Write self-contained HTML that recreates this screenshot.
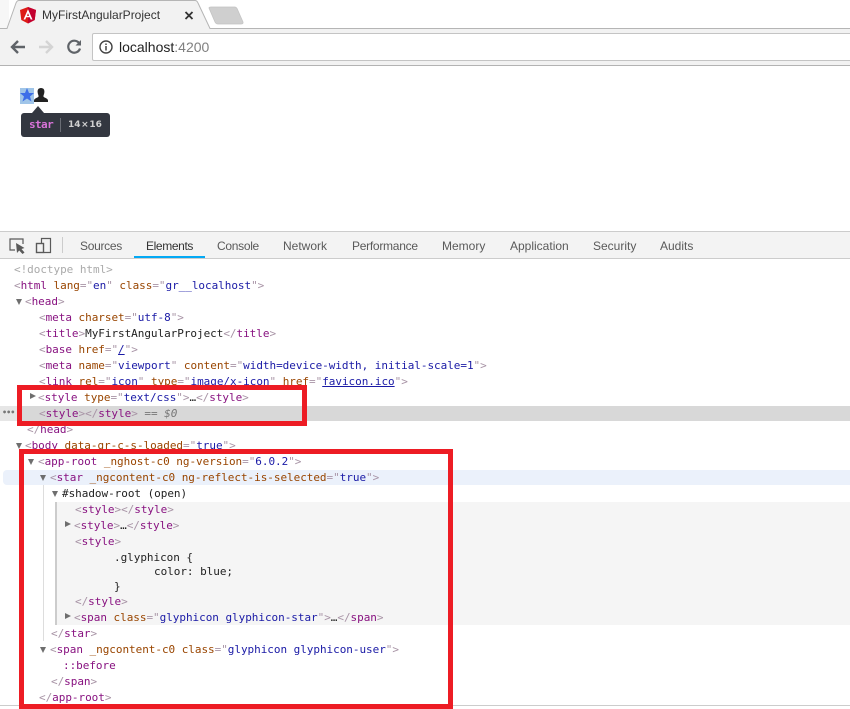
<!DOCTYPE html>
<html><head><meta charset="utf-8"><title>MyFirstAngularProject</title>
<style>
html,body{margin:0;padding:0;background:#fff}
body{width:850px;height:709px;position:relative;overflow:hidden;font-family:"Liberation Sans",sans-serif}
.a{position:absolute}
.l{position:absolute;margin-top:1px;font:11px/16px "DejaVu Sans Mono","Liberation Mono",monospace;white-space:pre;color:#222;letter-spacing:-.04px;height:16px}
.b{color:#a894a6}.n{color:#881280}.k{color:#994500}.v{color:#1a1aa6}.g{color:#aaa}.u{color:#1a1aa6;text-decoration:underline}
.t{position:absolute;top:239px;font-size:12px;line-height:14px;color:#5a5a5a;white-space:pre}
.tri{position:absolute;width:0;height:0;border-left:3.5px solid transparent;border-right:3.5px solid transparent;border-top:6px solid #6e6e6e}
.trr{position:absolute;width:0;height:0;border-top:3.5px solid transparent;border-bottom:3.5px solid transparent;border-left:6px solid #6e6e6e}
</style></head><body>
<div class="a" style="left:0;top:0;width:850px;height:66px;background:#f2f2f2"></div>
<div class="a" style="left:0;top:0;width:850px;height:28px;background:#fff"></div>
<div class="a" style="left:0;top:0;width:9px;height:28px;background:#f7f7f7"></div>
<div class="a" style="left:0;top:65px;width:850px;height:1px;background:#b3b3b3"></div>
<svg class="a" style="left:0;top:0" width="850" height="30" viewBox="0 0 850 30">
<path d="M7 29L16 3Q17 .5 19 .5H195Q197 .5 198 3L210 29Z" fill="#f2f2f2"/>
<path d="M0 28.500H7L16 3Q17 .5 19 .5H195Q197 .5 198 3L210 28.500H850" fill="none" stroke="#b5b5b5"/>
<path d="M209 8Q209 7 211 7H235Q236 7 237 8.500L243 22Q243.500 24 241 24H218Q216 24 215 22Z" fill="#cfcfcf" stroke="#c4c4c4" stroke-width=".8"/>
<path d="M28 7L20 10L21.300 20L28 23.500L34.700 20L36 10Z" fill="#dd1b16"/><path d="M28 7L36 10L34.700 20L28 23.500Z" fill="#c3002f"/>
<path d="M28 9.300L23.500 19.500H25.300L26.200 17.300H29.800L30.700 19.500H32.500ZM26.900 15.900L28 13.200L29.100 15.900Z" fill="#fff"/>
<path d="M185.500 12L192.500 19M192.500 12L185.500 19" stroke="#333" stroke-width="1.800"/>
</svg>
<div class="a" style="left:42px;top:7px;font-size:12px;line-height:16px;color:#333;white-space:pre">MyFirstAngularProject</div>
<svg class="a" style="left:0;top:30px" width="100" height="34" viewBox="0 0 100 34">
<path d="M25 17H12.500M18 11L12 17L18 23" fill="none" stroke="#5f6368" stroke-width="2.400"/>
<path d="M39 17H52M46 11L52 17L46 23" fill="none" stroke="#d4d4d4" stroke-width="2.400"/>
<path d="M79 13A6 6 0 1 0 80 18.500" fill="none" stroke="#5f6368" stroke-width="2.200"/><path d="M81 10V15.500H75.500Z" fill="#5f6368"/>
</svg>
<div class="a" style="left:92px;top:33px;width:770px;height:26px;background:#fff;border:1px solid #c4c4c4;border-radius:2px"></div>
<svg class="a" style="left:98px;top:39px" width="16" height="16" viewBox="0 0 16 16"><circle cx="8" cy="8" r="6" fill="none" stroke="#444" stroke-width="1.400"/><path d="M8 7V11.500M8 4.500V6" stroke="#444" stroke-width="1.500"/></svg>
<div class="a" style="left:119px;top:39px;font-size:14px;line-height:16px;color:#222;white-space:pre">localhost<span style="color:#808080">:4200</span></div>

<div class="a" style="left:20px;top:88px;width:14px;height:16px;background:#a0c5e8"></div>
<svg class="a" style="left:20px;top:88px" width="30" height="16" viewBox="0 0 30 16">
<path d="M7 0L9 5H14L10 8.500L11.500 13.500L7 10.500L2.500 13.500L4 8.500L0 5H5Z" fill="#3d6ee8"/>
<path d="M21 0C23.500 0 24.600 1.800 24.400 4C24.200 6.200 23.400 7.300 23.400 8.200C23.400 9.700 28 10 28 12.500V14H14V12.500C14 10 18.600 9.700 18.600 8.200C18.600 7.300 17.800 6.200 17.600 4C17.400 1.800 18.500 0 21 0Z" fill="#222"/>
</svg>
<div class="a" style="left:21px;top:113px;width:89px;height:24px;background:#333740;border-radius:3px"></div>
<div class="a" style="left:32px;top:106px;width:0;height:0;border-left:6.500px solid transparent;border-right:6.500px solid transparent;border-bottom:7px solid #333740"></div>
<div class="a" style="left:29px;top:117px;font:bold 11px/16px 'DejaVu Sans Mono',monospace;color:#d973d9;letter-spacing:-.6px">star</div>
<div class="a" style="left:60px;top:118px;width:1px;height:14px;background:#6a6d75"></div>
<div class="a" style="left:68px;top:118px;font:bold 9px/14px 'DejaVu Sans',sans-serif;color:#d0d0d0;white-space:pre;word-spacing:-2.500px">14 × 16</div>

<div class="a" style="left:0;top:231px;width:850px;height:28px;background:#f3f3f3;border-top:1px solid #ccc;border-bottom:1px solid #ccc;box-sizing:border-box"></div>
<svg class="a" style="left:7px;top:236px" width="46" height="20" viewBox="0 0 46 20">
<path d="M8 14H3V3H16V8" fill="none" stroke="#5a5a5a" stroke-width="1.200"/><path d="M9 7L10 17L12.200 14.500L15.500 18L17.500 16.500L14.500 13L17.500 12Z" fill="#5a5a5a"/>
<path d="M34.500 7V2.500H43.500V16.500H37" fill="none" stroke="#5a5a5a" stroke-width="1.200"/><rect x="29.500" y="7.500" width="7" height="9" fill="none" stroke="#5a5a5a" stroke-width="1.400"/>
</svg>
<div class="a" style="left:62px;top:237px;width:1px;height:16px;background:#ccc"></div>
<div class="t" style="left:80px;letter-spacing:-.3px">Sources</div>
<div class="t" style="left:146px;color:#333;letter-spacing:-.37px">Elements</div>
<div class="a" style="left:134px;top:256px;width:71px;height:2px;background:#03a9f4"></div>
<div class="t" style="left:217px;letter-spacing:-.3px">Console</div>
<div class="t" style="left:283px">Network</div>
<div class="t" style="left:352px;letter-spacing:-.27px">Performance</div>
<div class="t" style="left:442px">Memory</div>
<div class="t" style="left:510px">Application</div>
<div class="t" style="left:593px">Security</div>
<div class="t" style="left:660px">Audits</div>

<div class="a" style="left:0;top:406px;width:850px;height:15px;background:#d8d8d8"></div>
<div class="a" style="left:0;top:406px;width:17px;height:15px;background:#e6e6e6"></div>
<div class="a" style="left:2px;top:408px;font:bold 8px/10px 'DejaVu Sans',sans-serif;color:#777;letter-spacing:-1px">•••</div>
<div class="a" style="left:3px;top:470px;width:847px;height:15px;background:#ebf1fb;border-radius:4px 0 0 4px"></div>
<div class="a" style="left:55px;top:502px;width:795px;height:123px;background:#f5f5f5;border-left:2px solid #ccc;box-sizing:border-box"></div>
<div class="a" style="left:43px;top:485px;width:1px;height:156px;background:#ddd"></div>
<div class="a" style="left:0;top:705px;width:850px;height:1px;background:#ccc"></div>

<div class="l g" style="left:14px;top:261px">&lt;!doctype html&gt;</div>
<div class="l" style="left:14px;top:277px"><span class="b">&lt;</span><span class="n">html</span> <span class="k">lang</span><span class="b">="</span><span class="v">en</span><span class="b">"</span> <span class="k">class</span><span class="b">="</span><span class="v">gr__localhost</span><span class="b">"&gt;</span></div>
<div class="tri" style="left:16px;top:299px"></div>
<div class="l" style="left:25px;top:293px"><span class="b">&lt;</span><span class="n">head</span><span class="b">&gt;</span></div>
<div class="l" style="left:39px;top:309px"><span class="b">&lt;</span><span class="n">meta</span> <span class="k">charset</span><span class="b">="</span><span class="v">utf-8</span><span class="b">"&gt;</span></div>
<div class="l" style="left:39px;top:325px"><span class="b">&lt;</span><span class="n">title</span><span class="b">&gt;</span><span style="color:#222">MyFirstAngularProject</span><span class="b">&lt;/</span><span class="n">title</span><span class="b">&gt;</span></div>
<div class="l" style="left:39px;top:341px"><span class="b">&lt;</span><span class="n">base</span> <span class="k">href</span><span class="b">="</span><span class="u">/</span><span class="b">"&gt;</span></div>
<div class="l" style="left:39px;top:357px"><span class="b">&lt;</span><span class="n">meta</span> <span class="k">name</span><span class="b">="</span><span class="v">viewport</span><span class="b">"</span> <span class="k">content</span><span class="b">="</span><span class="v">width=device-width, initial-scale=1</span><span class="b">"&gt;</span></div>
<div class="l" style="left:39px;top:373px"><span class="b">&lt;</span><span class="n">link</span> <span class="k">rel</span><span class="b">="</span><span class="v">icon</span><span class="b">"</span> <span class="k">type</span><span class="b">="</span><span class="v">image/x-icon</span><span class="b">"</span> <span class="k">href</span><span class="b">="</span><span class="u">favicon.ico</span><span class="b">"&gt;</span></div>
<div class="trr" style="left:30px;top:393px"></div>
<div class="l" style="left:38px;top:389px"><span class="b">&lt;</span><span class="n">style</span> <span class="k">type</span><span class="b">="</span><span class="v">text/css</span><span class="b">"&gt;</span>…<span class="b">&lt;/</span><span class="n">style</span><span class="b">&gt;</span></div>
<div class="l" style="left:39px;top:405px"><span class="b">&lt;</span><span class="n">style</span><span class="b">&gt;&lt;/</span><span class="n">style</span><span class="b">&gt;</span> <span style="color:#777">== <i>$0</i></span></div>
<div class="l" style="left:27px;top:421px"><span class="b">&lt;/</span><span class="n">head</span><span class="b">&gt;</span></div>
<div class="tri" style="left:16px;top:443px"></div>
<div class="l" style="left:25px;top:437px"><span class="b">&lt;</span><span class="n">body</span> <span class="k">data-gr-c-s-loaded</span><span class="b">="</span><span class="v">true</span><span class="b">"&gt;</span></div>
<div class="tri" style="left:28px;top:459px"></div>
<div class="l" style="left:38px;top:453px"><span class="b">&lt;</span><span class="n">app-root</span> <span class="k">_nghost-c0</span> <span class="k">ng-version</span><span class="b">="</span><span class="v">6.0.2</span><span class="b">"&gt;</span></div>
<div class="tri" style="left:40px;top:475px"></div>
<div class="l" style="left:50px;top:469px"><span class="b">&lt;</span><span class="n">star</span> <span class="k">_ngcontent-c0</span> <span class="k">ng-reflect-is-selected</span><span class="b">="</span><span class="v">true</span><span class="b">"&gt;</span></div>
<div class="tri" style="left:52px;top:491px"></div>
<div class="l" style="left:62px;top:485px">#shadow-root (open)</div>
<div class="l" style="left:75px;top:501px"><span class="b">&lt;</span><span class="n">style</span><span class="b">&gt;&lt;/</span><span class="n">style</span><span class="b">&gt;</span></div>
<div class="trr" style="left:65px;top:521px"></div>
<div class="l" style="left:74px;top:517px"><span class="b">&lt;</span><span class="n">style</span><span class="b">&gt;</span>…<span class="b">&lt;/</span><span class="n">style</span><span class="b">&gt;</span></div>
<div class="l" style="left:75px;top:533px"><span class="b">&lt;</span><span class="n">style</span><span class="b">&gt;</span></div>
<div class="l" style="left:114px;top:549px">.glyphicon {</div>
<div class="l" style="left:154px;top:563px">color: blue;</div>
<div class="l" style="left:114px;top:578px">}</div>
<div class="l" style="left:75px;top:593px"><span class="b">&lt;/</span><span class="n">style</span><span class="b">&gt;</span></div>
<div class="trr" style="left:65px;top:613px"></div>
<div class="l" style="left:74px;top:609px"><span class="b">&lt;</span><span class="n">span</span> <span class="k">class</span><span class="b">="</span><span class="v">glyphicon glyphicon-star</span><span class="b">"&gt;</span>…<span class="b">&lt;/</span><span class="n">span</span><span class="b">&gt;</span></div>
<div class="l" style="left:51px;top:625px"><span class="b">&lt;/</span><span class="n">star</span><span class="b">&gt;</span></div>
<div class="tri" style="left:40px;top:647px"></div>
<div class="l" style="left:50px;top:641px"><span class="b">&lt;</span><span class="n">span</span> <span class="k">_ngcontent-c0</span> <span class="k">class</span><span class="b">="</span><span class="v">glyphicon glyphicon-user</span><span class="b">"&gt;</span></div>
<div class="l" style="left:63px;top:657px"><span class="n">::before</span></div>
<div class="l" style="left:51px;top:673px"><span class="b">&lt;/</span><span class="n">span</span><span class="b">&gt;</span></div>
<div class="l" style="left:39px;top:689px"><span class="b">&lt;/</span><span class="n">app-root</span><span class="b">&gt;</span></div>

<div class="a" style="left:17px;top:385px;width:290px;height:41px;border:5px solid #ed1c24;box-sizing:border-box"></div>
<div class="a" style="left:19px;top:449px;width:434px;height:260px;border:5px solid #ed1c24;box-sizing:border-box"></div>
</body></html>
